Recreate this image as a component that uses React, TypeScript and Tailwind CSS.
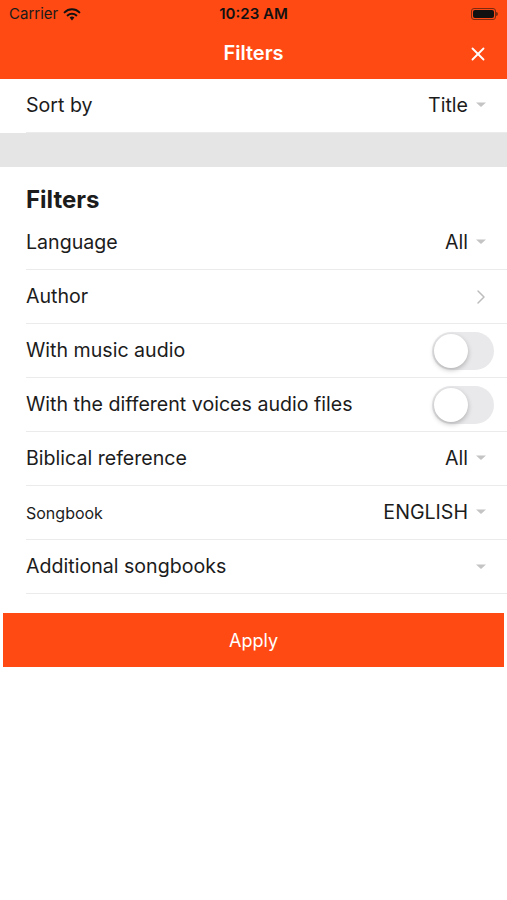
import React from 'react';
import { X, ChevronRight } from 'lucide-react';

const font = { fontFamily: 'Inter, "Liberation Sans", Arial, sans-serif' };

function Caret() {
  return (
    <svg width="12" height="8" viewBox="0 0 12 8" className="ml-[7px]">
      <path d="M1 1.5 L11 1.5 L6 6 Z" fill="#c4c4c4" />
    </svg>
  );
}

function Toggle() {
  return (
    <div className="w-[62px] h-[38px] rounded-full bg-[#e9e9eb] p-[2px] flex items-center">
      <div className="w-[34px] h-[34px] rounded-full bg-white shadow-[0_2px_5px_rgba(0,0,0,0.25)]" />
    </div>
  );
}

function Row({ label, small, children }: { label: string; small?: boolean; children?: React.ReactNode }) {
  return (
    <div className="h-[54px] flex items-center justify-between border-b border-[#ebebeb] pr-[20px]">
      <span className={small ? 'text-[16px] text-[#1c1c1c]' : 'text-[19.6px] text-[#1c1c1c]'}>{label}</span>
      <div className="flex items-center">{children}</div>
    </div>
  );
}

export default function App() {
  return (
    <div className="w-[507px] h-[900px] bg-white overflow-hidden" style={font}>
      {/* Header */}
      <header className="bg-[#ff4a14]">
        <div className="h-[28px] flex items-center justify-between px-[9px] relative">
          <div className="flex items-center gap-[5px] text-[15px] text-[#1a1a1a]">
            <span>Carrier</span>
            <svg width="18" height="13" viewBox="0 0 18 13">
              <path d="M9 12.5 L6.6 9.6 A3.6 3.6 0 0 1 11.4 9.6 Z" fill="#111" />
              <path d="M4.6 7.4 A6.4 6.4 0 0 1 13.4 7.4" stroke="#111" strokeWidth="2" fill="none" strokeLinecap="round" />
              <path d="M1.6 4.4 A10.4 10.4 0 0 1 16.4 4.4" stroke="#111" strokeWidth="2" fill="none" strokeLinecap="round" />
            </svg>
          </div>
          <span className="absolute left-1/2 -translate-x-1/2 text-[15px] font-semibold text-[#111]">10:23 AM</span>
          <div className="flex items-center">
            <div className="w-[25px] h-[12px] rounded-[3px] border border-[#7a2a10] p-[1px]">
              <div className="w-full h-full rounded-[2px] bg-[#111]" />
            </div>
            <div className="w-[2px] h-[4px] bg-[#7a2a10] rounded-r-sm" />
          </div>
        </div>
        <div className="h-[51px] flex items-center justify-center relative">
          <span className="text-[20px] font-semibold text-white -mt-[2px]">Filters</span>
          <X className="absolute right-[18px] text-white" size={22} strokeWidth={2} />
        </div>
      </header>

      {/* Sort */}
      <div className="pl-[26px]">
        <Row label="Sort by">
          <span className="text-[19.6px] text-[#1c1c1c]">Title</span>
          <Caret />
        </Row>
      </div>
      <div className="h-[34px] bg-[#e5e5e5]" />

      {/* Filters */}
      <div className="pl-[26px]">
        <h2 className="text-[24px] font-bold text-[#1c1c1c] pt-[18px] leading-[30px]">Filters</h2>
        <div className="mt-[1px]">
          <Row label="Language">
            <span className="text-[19.6px] text-[#1c1c1c]">All</span>
            <Caret />
          </Row>
          <Row label="Author">
            <ChevronRight className="text-[#bdbdbd] mr-[-6px]" size={24} strokeWidth={1.5} />
          </Row>
          <div className="h-[54px] flex items-center justify-between border-b border-[#ebebeb] pr-[13px]">
            <span className="text-[19.6px] text-[#1c1c1c]">With music audio</span>
            <Toggle />
          </div>
          <div className="h-[54px] flex items-center justify-between border-b border-[#ebebeb] pr-[13px]">
            <span className="text-[19.6px] text-[#1c1c1c]">With the different voices audio files</span>
            <Toggle />
          </div>
          <Row label="Biblical reference">
            <span className="text-[19.6px] text-[#1c1c1c]">All</span>
            <Caret />
          </Row>
          <Row label="Songbook" small>
            <span className="text-[19.6px] text-[#1c1c1c]">ENGLISH</span>
            <Caret />
          </Row>
          <Row label="Additional songbooks">
            <Caret />
          </Row>
        </div>
      </div>

      {/* Apply */}
      <div className="px-[3px] pt-[19px]">
        <button className="w-full h-[54px] bg-[#ff4a14] text-white text-[18px] flex items-center justify-center">
          Apply
        </button>
      </div>
    </div>
  );
}
